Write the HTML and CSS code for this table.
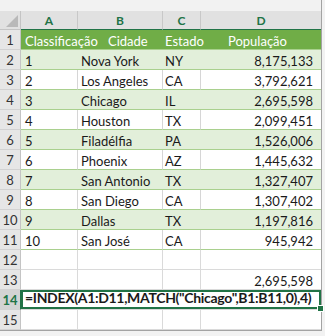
FILE: index.html
```html
<!DOCTYPE html>
<html>
<head>
<meta charset="utf-8">
<link rel="stylesheet" href="styles.css">
</head>
<body>
<div class="sheet">
  <div class="row colhead">
    <div class="corner"><span class="tri"></span></div>
    <div class="ch">A</div>
    <div class="ch">B</div>
    <div class="ch">C</div>
    <div class="ch">D</div>
  </div>

  <div class="row thead">
    <div class="rh">1</div>
    <div class="c a">Classificação</div>
    <div class="c b hb">Cidade</div>
    <div class="c cc">Estado</div>
    <div class="c d hd">População</div>
  </div>
  <div class="row band">
    <div class="rh">2</div><div class="c a">1</div><div class="c b">Nova York</div><div class="c cc">NY</div><div class="c d">8,175,133</div>
  </div>
  <div class="row plain">
    <div class="rh">3</div><div class="c a">2</div><div class="c b">Los Angeles</div><div class="c cc">CA</div><div class="c d">3,792,621</div>
  </div>
  <div class="row band">
    <div class="rh">4</div><div class="c a">3</div><div class="c b">Chicago</div><div class="c cc">IL</div><div class="c d">2,695,598</div>
  </div>
  <div class="row plain">
    <div class="rh">5</div><div class="c a">4</div><div class="c b">Houston</div><div class="c cc">TX</div><div class="c d">2,099,451</div>
  </div>
  <div class="row band">
    <div class="rh">6</div><div class="c a">5</div><div class="c b">Filadélfia</div><div class="c cc">PA</div><div class="c d">1,526,006</div>
  </div>
  <div class="row plain">
    <div class="rh">7</div><div class="c a">6</div><div class="c b">Phoenix</div><div class="c cc">AZ</div><div class="c d">1,445,632</div>
  </div>
  <div class="row band">
    <div class="rh">8</div><div class="c a">7</div><div class="c b">San Antonio</div><div class="c cc">TX</div><div class="c d">1,327,407</div>
  </div>
  <div class="row plain">
    <div class="rh">9</div><div class="c a">8</div><div class="c b">San Diego</div><div class="c cc">CA</div><div class="c d">1,307,402</div>
  </div>
  <div class="row band">
    <div class="rh">10</div><div class="c a">9</div><div class="c b">Dallas</div><div class="c cc">TX</div><div class="c d">1,197,816</div>
  </div>
  <div class="row plain">
    <div class="rh">11</div><div class="c a">10</div><div class="c b">San José</div><div class="c cc">CA</div><div class="c d">945,942</div>
  </div>
  <div class="row empty">
    <div class="rh">12</div><div class="c a"></div><div class="c b"></div><div class="c cc"></div><div class="c d"></div>
  </div>
  <div class="row empty">
    <div class="rh">13</div><div class="c a"></div><div class="c b"></div><div class="c cc"></div><div class="c d">2,695,598</div>
  </div>
  <div class="row empty">
    <div class="rh sel">14</div>
    <div class="c formula">=INDEX(A1:D11,MATCH("Chicago",B1:B11,0),4)<span class="handle"></span></div>
  </div>
  <div class="row empty">
    <div class="rh">15</div><div class="c a"></div><div class="c b"></div><div class="c cc"></div><div class="c d"></div>
  </div>
</div>
</body>
</html>
```

FILE: styles.css
```css
html, body {
  margin: 0;
  padding: 0;
}
body {
  width: 325px;
  height: 336px;
  overflow: hidden;
  background: #f2f2f2;
  font-family: Lato, "Open Sans", sans-serif;
  font-size: 13px;
  color: #1a1a1a;
}
.sheet {
  width: 322px;
  padding-top: 11px;
  border-right: 1px solid #a3a3a3;
  border-bottom: 1px solid #a3a3a3;
  box-sizing: border-box;
  background: #f2f2f2;
}
.row {
  display: grid;
  grid-template-columns: 21px 57px 85px 38px 120px;
  height: 20px;
  background: #fff;
}
.row > div {
  box-sizing: border-box;
  min-width: 0;
}

/* column header */
.colhead {
  height: 19px;
  background: #e1e1e1;
}
.corner {
  display: flex;
  align-items: flex-end;
  justify-content: flex-end;
  padding: 0 2px 2px 0;
  border-right: 1px solid #c4c4c4;
  border-bottom: 1px solid #c4c4c4;
}
.tri {
  width: 12px;
  height: 12px;
  background: #b9b9b9;
  clip-path: polygon(100% 0, 100% 100%, 0 100%);
}
.ch {
  display: flex;
  align-items: center;
  justify-content: center;
  font-size: 12px;
  font-weight: 700;
  color: #217346;
  border-right: 1px solid #c8c8c8;
  border-bottom: 1px solid #217346;
  padding-top: 1px;
}
.ch:last-child {
  border-right: none;
}

/* row header */
.rh {
  display: flex;
  align-items: center;
  justify-content: center;
  background: #e6e6e6;
  color: #333;
  font-size: 13px;
  border-right: 1px solid #c4c4c4;
  border-bottom: 1px solid #d2d2d2;
  padding-top: 1px;
}
.rh.sel {
  background: #d3d3d3;
  color: #217346;
  font-weight: 700;
  border-right: 1px solid #217346;
}

/* cells */
.c {
  display: flex;
  align-items: flex-end;
  line-height: 16px;
  white-space: nowrap;
  overflow: visible;
  border-bottom: 1px solid #a9d08e;
}
.c.a { padding-left: 4px; }
.c.b { padding-left: 3px; }
.c.cc { padding-left: 2px; }
.c.d { justify-content: flex-end; padding-right: 8px; }

.thead {
  background: #70ad47;
}
.thead .c {
  color: #fff;
}
.thead .hb { padding-left: 30px; }
.thead .hd { justify-content: flex-start; padding-left: 27px; padding-right: 0; }

.band {
  background: #e2efda;
}
.plain .c {
  border-right: 1px solid #d6d6d6;
}
.plain .c.d { border-right: none; }

.empty .c {
  border-right: 1px solid #dadada;
  border-bottom: 1px solid #dadada;
}
.empty .c.d { border-right: none; }

.formula {
  grid-column: 2 / 6;
  position: relative;
  padding-left: 4px;
  padding-bottom: 3px;
  font-size: 14px;
  font-weight: 700;
  letter-spacing: -0.32px;
  color: #1a1a1a;
  box-shadow: inset 0 0 0 2px #217346;
}
.empty .formula {
  border-right: none;
}
.handle {
  position: absolute;
  right: -3px;
  bottom: -3px;
  width: 5px;
  height: 5px;
  background: #217346;
  border: 1px solid #fff;
}
```
